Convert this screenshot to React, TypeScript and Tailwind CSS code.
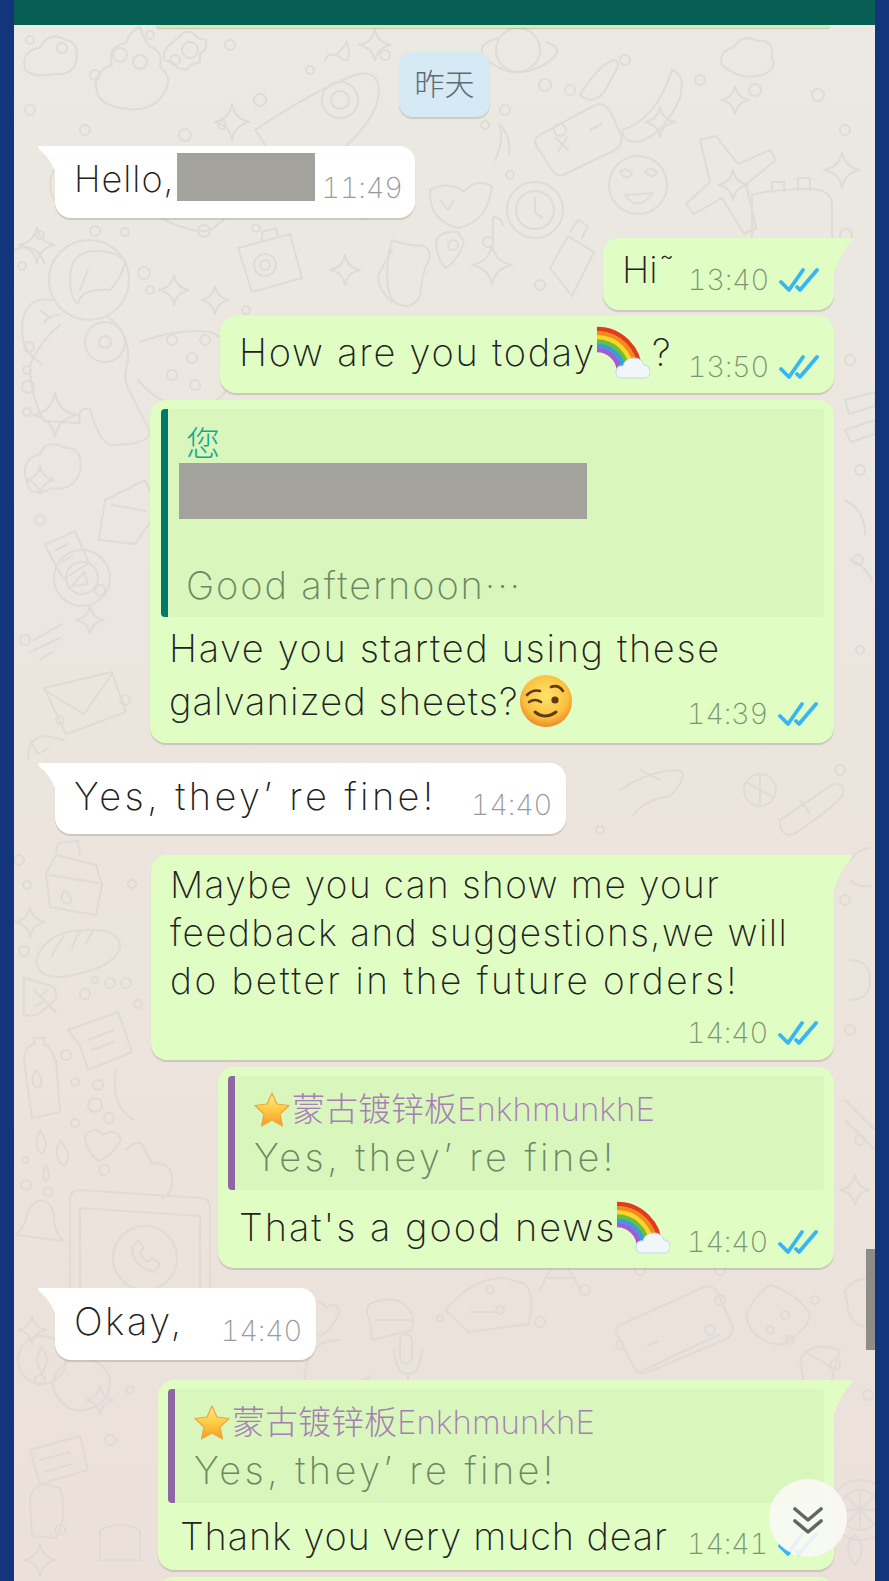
import type { ReactNode } from "react";

const dots: [number, number, number][] = [
  [30, 40, 4], [62, 48, 5], [95, 75, 5], [150, 35, 4], [175, 60, 5], [230, 45, 5], [260, 100, 6], [310, 70, 4], [385, 55, 5], [452, 90, 5],
  [30, 110, 5], [85, 130, 5], [185, 135, 6], [222, 125, 4], [505, 110, 5], [545, 85, 6], [570, 90, 5], [625, 60, 5], [700, 80, 5], [755, 90, 6],
  [818, 95, 6], [845, 130, 5], [40, 235, 4], [95, 231, 5], [125, 232, 4], [22, 266, 4], [144, 273, 6], [150, 290, 4], [204, 231, 6],
  [29, 347, 5], [27, 370, 4], [28, 387, 6], [27, 412, 4], [246, 310, 4], [256, 228, 4], [330, 205, 6], [365, 215, 4], [510, 175, 4],
  [560, 130, 6], [485, 125, 4], [540, 285, 5], [610, 300, 5], [720, 290, 5], [846, 235, 6], [850, 360, 5], [860, 470, 5], [858, 560, 5],
  [19, 860, 5], [27, 885, 4], [132, 884, 4], [24, 951, 5], [95, 980, 3], [110, 983, 5], [126, 983, 5], [85, 994, 5], [138, 1004, 4],
  [66, 1055, 5], [75, 1082, 4], [98, 1085, 5], [95, 1105, 7], [109, 1118, 5], [75, 1123, 4], [104, 1170, 5], [25, 1160, 3], [26, 1185, 5],
  [440, 1318, 3], [500, 1310, 4], [540, 1322, 5], [585, 1290, 5], [620, 1345, 4], [710, 1330, 5], [720, 1300, 5], [815, 1300, 4], [790, 1340, 4],
  [365, 1400, 4], [420, 1398, 5], [635, 1410, 4], [742, 1395, 4], [835, 1365, 5], [868, 1395, 5], [40, 1380, 5], [110, 1440, 5], [60, 1530, 5],
  [130, 1390, 4], [840, 770, 5], [850, 1030, 5], [860, 1140, 5], [25, 640, 5], [60, 720, 4], [100, 590, 5], [125, 700, 5], [40, 520, 5],
  [860, 650, 4], [845, 900, 5], [600, 830, 4], [640, 1270, 5], [490, 1290, 4], [720, 1270, 5],
];

const stars: [number, number, number][] = [
  [37, 245, 18], [174, 290, 15], [375, 45, 16], [232, 122, 18], [660, 122, 15], [733, 185, 15], [842, 170, 18], [215, 300, 14],
  [345, 270, 15], [355, 205, 12], [492, 265, 20], [30, 922, 15], [55, 415, 22], [40, 1560, 16], [735, 100, 14], [100, 1400, 14],
  [32, 1330, 14], [855, 1190, 15], [90, 620, 14], [40, 480, 14],
];

function Wallpaper() {
  return (
    <svg className="absolute inset-0 h-full w-full" viewBox="0 0 861 1581" fill="none" stroke="#dfdcd5" strokeWidth="2" strokeLinecap="round" strokeLinejoin="round">
      <g transform="translate(-14 0)">
        {dots.map(([x, y, r], i) => <circle key={i} cx={x} cy={y} r={r} />)}
        {stars.map(([x, y, r], i) => (
          <path key={i} d={`M${x} ${y - r}Q${x + r * 0.15} ${y - r * 0.15} ${x + r} ${y}Q${x + r * 0.15} ${y + r * 0.15} ${x} ${y + r}Q${x - r * 0.15} ${y + r * 0.15} ${x - r} ${y}Q${x - r * 0.15} ${y - r * 0.15} ${x} ${y - r}Z`} />
        ))}

        {/* top row */}
        <path d="M25 70q-4-20 15-22 8-18 26-8 14 2 10 22-4 14-22 12-20 4-29-4Z" />
        <path d="M98 95q-8-22 14-30-6-18 14-22 4-12 14-16 4 14 10 20 14 4 10 20 14 10 4 26-10 18-36 16-24-2-30-14Z" />
        <circle cx="120" cy="55" r="7" /><circle cx="140" cy="62" r="7" />
        <path d="M178 38l6-6 8 0 6 6 8 2 0 8-6 6 0 8-8 2-6 6-8-2-6-6-8-2 0-8 4-6Z" /><circle cx="190" cy="50" r="8" />
        <path d="M325 60q4-10 16-2t6-16q-2 4-10 12" />
        <path d="M255 130q60-40 100-55 22-6 24 14 0 24-26 50-30 30-50 22l-22 22q-4-24-26-53Z" /><circle cx="340" cy="100" r="18" /><circle cx="340" cy="100" r="9" />
        <circle cx="518" cy="50" r="22" /><path d="M490 62q-20-16 8-24M546 42q24 8-4 24-30 14-52-4" />
        <path d="M580 95q18-30 34-35 8 2 0 14l-10 18q-12 14-24 3Z" />
        <path d="M722 65q-4-14 12-18 8-14 24-6 16-2 14 16 6 12-10 18-22 6-40-10Z" />
        <path d="M622 130q34-10 50-60 14 4 8 28-14 32-36 42-20 6-22-10Z" />
        <path d="M540 135l55-30q10-3 16 8l10 22q3 10-8 16l-50 24q-8 2-13-8l-14-22q-3-6 4-10Z" /><path d="M556 138l12 12M568 136l-10 16M590 130l12-6" />
        <circle cx="638" cy="185" r="29" /><path d="M625 195q12 18 28-2Z" /><path d="M620 172q6-6 12 2-6 8-12-2ZM645 172q6-6 12 0-4 8-12 0Z" />
        <path d="M700 140l10 42-24 22 8 10 28-16 22 36 12-6-10-44 30-24-6-10-32 14-22-28Z" />
        <path d="M752 195q20-6 56-6 22 0 24 14v36h-80Z" /><path d="M772 192v-10h12v10M798 190v-12h12v12" />
        <path d="M88 155q-10 16-4 34 6 4 14 14M60 160q-16 20-6 40M50 150l24 28" />
        <path d="M155 205q-20-6-24-24 14-18 38-16 34 10 20 30-8 14-34 10Z" />
        <path d="M186 228q-34-8-42-34 6-8 18-6 12-14 26-2 10-14 22-4 16 2 14 18 10 14-6 24-10 12-32 4Z" />
        <path d="M172 190q8-8 14 0 8-6 14 2-6 14-14 16-12-4-14-18Z" />
        <path d="M430 190q20-10 34 2 10-14 28-6-4 36-34 42-30-8-28-38Z" /><path d="M440 200l8 10 6-10" />
        <path d="M495 160q10-20 4-36 12 10 10 30" />
        <circle cx="535" cy="210" r="28" /><circle cx="535" cy="210" r="19" /><path d="M535 198v14l7 6" />
        <path d="M458 232q-16-2-22 8 0 18 10 28 12-8 18-26Z" /><circle cx="453" cy="245" r="5" />
        <path d="M493 217v24M493 217q8 0 10 8" /><circle cx="488" cy="242" r="5" />

        {/* astronaut */}
        <circle cx="89" cy="280" r="40" />
        <path d="M70 278q0-32 38-26 22 6 16 14-4 14-14 24-30-2-32 14-8-6-8-26Z" /><path d="M80 290l8-20" />
        <path d="M52 300q-30-4-30 30 0 22 20 34M60 315q-12 0-16 8M40 310l10 8" />
        <path d="M60 325q-20 16-30 40 0 30 14 56l36 2q-4-16 10-14 8 30 20 36 40 0 40-14-16-30-20-40-8-10-2-30 2-28-20-44" />
        <circle cx="105" cy="342" r="20" /><circle cx="105" cy="342" r="6" />
        <path d="M140 342q40-14 70-10 22 8 24 30 0 34-30 44-40 6-66-26" />
        <circle cx="172" cy="340" r="5" /><circle cx="192" cy="358" r="5" /><circle cx="205" cy="340" r="5" /><circle cx="172" cy="375" r="5" /><circle cx="195" cy="385" r="5" />

        <circle cx="265" cy="265" r="11" /><circle cx="265" cy="265" r="5" />
        <path d="M238 248l52-14 12 44-50 14Z" /><path d="M262 240v-8l14-4 2 8" />
        <path d="M392 240q16 6 32 6 10 6 2 20-4 10-6 30-10 18-28 4-10-20 0-60Z" /><path d="M392 250q-6 10-14 26 0 14 14 26" />
        <path d="M550 268l18-32 26 16-22 44Z" /><path d="M570 232l8-12 10 6-6 12" />

        {/* left column */}
        <path d="M15 250q20-10 30 14" />
        <path d="M30 490q-14-30 10-36 6-16 26-6 18 0 14 24-8 20-28 16-14 8-22 2Z" />
        <path d="M45 545l30-14 14 32-26 16ZM56 550l12-6M62 562l10-6" />
        <path d="M105 500l40-20 14 30-24 34-36-4Z" /><path d="M112 505l34 6" />
        <circle cx="82" cy="578" r="28" /><circle cx="82" cy="578" r="16" /><path d="M72 586l12-14 4 12Z" />
        <path d="M34 640l28-16M30 652l30-14M40 660l12-8" />
        <path d="M44 688l68-16 14 40-60 22Z" /><path d="M44 690l40 24 28-40" />
        <path d="M28 760q0-24 18-24l18 4" /><path d="M30 740l8 14 10-6" />

        {/* milk, bread, leaf */}
        <path d="M46 873l10-18 40 10 6 20-6 30-46-8-4-34ZM98 883l-48-8M56 853l2-10 20-2 2 14" /><path d="M64 890q-6 12 4 14 8-4-4-14Z" />
        <path d="M36 960q10-30 50-30 30-2 34 14 0 20-42 30-40 10-42-14Z" /><path d="M64 936q-8 10-12 20M80 932q-6 8-8 18M94 930q-6 8-8 14" />
        <path d="M24 978l28 8q10 10-2 18-14 16-26 10Z" /><path d="M34 990l22 22M40 996l8-6M44 1002l-8 4" />
        <path d="M68 1030l50-18 14 40-44 18-8-24Z" /><path d="M88 1040l26-10M92 1050l22-8" />
        <path d="M24 1060q0-12 10-16v-6h10v6q8 4 12 18l4 50-28 6Z" /><path d="M36 1070q-8 14 2 18 8-6-2-18Z" />
        <path d="M116 1070q-6 36 18 50" />
        <path d="M40 1130q-8 18 2 24 8-8-2-24ZM60 1140q-8 18 4 26 10-10-4-26ZM46 1165q-6 12 0 16 6-4 0-16Z" />
        <path d="M85 1135q10-10 18 0 12-8 18 4-8 16-22 22-14-10-14-26Z" />
        <path d="M16 1235q10-10 12-24 6-12 16-10 10 4 10 20 2 14 10 20Z" /><circle cx="48" cy="1192" r="4" />

        {/* whatsapp screen */}
        <path d="M70 1200q0-10 10-10l120 8q10 0 10 10l0 90q0 10-10 10H70Z" />
        <path d="M80 1208l120 8v80H80Z" /><circle cx="145" cy="1258" r="32" /><path d="M132 1248q0 18 22 24l6-8-8-6-4 4q-6-2-8-10l4-4-6-8Z" />
        <path d="M126 1150q10-10 16-6l10 20q14-4 20 10 2 20-10 24" />

        {/* bottom */}
        <path d="M340 1340q-30 0-34 28-6 16 14 22 30 4 50-14M370 1320q-8-14 4-18 20-6 30 2 12 10 8 26l-40 10ZM375 1320h36" />
        <path d="M300 1310q20-16 26-2 10-8 14 4-10 20-20 24-16-10-20-26Z" />
        <rect x="400" y="1334" width="12" height="30" rx="6" /><path d="M394 1350q2 24 14 24t14-24M408 1374v22" />
        <path d="M445 1310q30-34 60-32l20 6q10 10 4 40l-60 8ZM470 1312h28" />
        <path d="M540 1290q10-22 20-34 14 20 20 34M548 1278h24" />
        <path d="M620 1325l84-38q10-2 14 6l14 32q2 10-6 14l-80 34q-8 2-12-6l-18-34q-2-6 4-8Z" /><path d="M648 1345l10-4M640 1372l80-38" />
        <path d="M770 1285q30 10 40 30-4 18-30 30-28-4-34-28 6-20 24-32Z" /><circle cx="785" cy="1315" r="4" /><circle cx="770" cy="1330" r="4" />
        <path d="M800 1360q10-20 40-10l-14 50-20-4Z" /><path d="M805 1352l28 16" />
        <circle cx="540" cy="1450" r="40" /><circle cx="540" cy="1450" r="28" /><path d="M540 1422v56M512 1450h56M520 1430l40 40M560 1430l-40 40" />
        <circle cx="470" cy="1430" r="30" /><path d="M462 1420l18 12-16 14Z" />
        <circle cx="860" cy="1510" r="30" /><circle cx="860" cy="1510" r="20" /><path d="M860 1490v40M840 1510h40M846 1496l28 28M874 1496l-28 28" />
        <path d="M855 1565q-14-20 0-30 14 14 0 30Z" />
        <path d="M60 1400q-18-20 10-40 30-6 40 18 0 24-18 30-20 8-32-8Z" />
        <path d="M30 1450l50-14 8 34-48 14ZM40 1460l30-8M44 1472l28-8" />
        <circle cx="42" cy="1360" r="24" /><path d="M42 1346l6 14-6 14-6-14Z" />
        <path d="M30 1500q2-14 14-16l16 4q8 30-4 50l-24-2Z" />
        <path d="M100 1530q20-10 40 0v30h-40Z" />

        {/* right edge */}
        <path d="M845 400l30-8v14l-26 8ZM845 430l30-10v14l-24 8Z" />
        <path d="M845 500q20 10 20 34M850 560q14 4 22 20" />
        <path d="M780 820l50-34q12-6 14 6-2 10-50 42-14 4-14-14ZM800 800l10 14" />
        <path d="M620 790q30-20 60-20 8 8-10 26-26 4-38 20M640 770l20 10" />
        <circle cx="760" cy="790" r="16" /><path d="M746 782l28 16M760 774v32" />
        <path d="M850 860q6-10 20-12M850 880q8 8 20 6" />
        <path d="M850 960q20 0 20 20t-20 20" />
        <path d="M845 1100l30 30M845 1120l30 30" />
        <path d="M845 1290q12-16 30-8v40q-18 10-26-8Z" />
      </g>
    </svg>
  );
}

function Ticks() {
  return (
    <svg width="40" height="26" viewBox="0 0 40 26" fill="none" stroke="#38b6f1" strokeWidth="3.8" strokeLinecap="round" strokeLinejoin="round">
      <path d="M2 15l8 8L24 3" />
      <path d="M18 20l3 3L38 3" />
    </svg>
  );
}

function Rainbow() {
  const bands = ["#e23a1e", "#f48a1c", "#fbd52a", "#6cbf35", "#3a9be0", "#a45ad0"];
  return (
    <svg width="58" height="54" viewBox="0 0 58 54" fill="none" className="-ml-[4px] inline-block shrink-0">
      <defs>
        <clipPath id="bow"><path d="M5 0h53v46H5z" /></clipPath>
      </defs>
      <g clipPath="url(#bow)">
        {bands.map((c, i) => (
          <circle key={c} cx="5" cy="47" r={43 - i * 4.2} stroke={c} strokeWidth="4.6" />
        ))}
      </g>
      <path d="M30 53q-7 0-6-7 1-6 7-5 2-8 11-8 8 0 10 7 6 0 6 7 0 6-6 6Z" fill="#f1f6f9" stroke="#c6d7e2" strokeWidth="1" />
    </svg>
  );
}

function Wink() {
  return (
    <svg width="54" height="54" viewBox="0 0 54 54" className="inline-block shrink-0">
      <defs>
        <radialGradient id="wink" cx="50%" cy="40%" r="60%">
          <stop offset="0" stopColor="#fde46a" />
          <stop offset="0.7" stopColor="#fbc13f" />
          <stop offset="1" stopColor="#ee8a2a" />
        </radialGradient>
      </defs>
      <circle cx="27" cy="27" r="26" fill="url(#wink)" />
      <g fill="none" stroke="#5f3a16" strokeWidth="2.6" strokeLinecap="round">
        <path d="M8 21q6-6 13-4" />
        <path d="M10 28q6-4 12 0" />
        <path d="M32 13q7-3 12 4" />
        <path d="M16 38q10 8 21 0" strokeWidth="3" />
      </g>
      <circle cx="36" cy="26" r="3.6" fill="#5f3a16" />
    </svg>
  );
}

function Star() {
  return (
    <svg width="36" height="36" viewBox="0 0 36 36" className="inline-block shrink-0">
      <defs>
        <linearGradient id="star" x1="0" y1="0" x2="0" y2="1">
          <stop offset="0" stopColor="#ffe98a" />
          <stop offset="0.55" stopColor="#fdc93f" />
          <stop offset="1" stopColor="#f39b2a" />
        </linearGradient>
      </defs>
      <path d="M18 2l5 11 12 1.500-9 8.500 2.500 12L18 29l-10.500 6L10 23 1 14.500 13 13Z" fill="url(#star)" stroke="#efa63a" strokeWidth="1.200" strokeLinejoin="round" />
    </svg>
  );
}

function Chevrons() {
  return (
    <svg width="32" height="28" viewBox="0 0 32 28" fill="none" stroke="#666661" strokeWidth="3.6" strokeLinecap="round" strokeLinejoin="round" className="mt-[6px]">
      <path d="M3 2l13 11L29 2" />
      <path d="M3 14l13 11 13-11" />
    </svg>
  );
}

function Time({ value, mine }: { value: string; mine?: boolean }) {
  return (
    <span className={`text-[29px] leading-none font-extralight tracking-[-0.3px] tabular-nums ${mine ? "text-[#7d9472]" : "text-[#9a9a9a]"}`}>{value}</span>
  );
}

function Tail({ side }: { side: "left" | "right" }) {
  if (side === "left") {
    return (
      <svg width="20" height="34" viewBox="0 0 20 34" className="absolute -left-[17px] top-0">
        <path d="M0 0h20v34Q15 14 1 3Z" fill="#ffffff" />
      </svg>
    );
  }
  return (
    <svg width="22" height="34" viewBox="0 0 22 34" className="absolute -right-[19px] top-0">
      <path d="M0 0h21q1 0 0 2Q10 14 3 34H0Z" fill="#e0fdc3" />
    </svg>
  );
}

function Bubble({ mine, tail, className, children }: { mine?: boolean; tail?: boolean; className: string; children: ReactNode }) {
  return (
    <div
      className={`relative shrink-0 shadow-[0_2px_1px_rgba(90,90,70,0.22)] ${mine ? "self-end mr-[41px] bg-[#e0fdc3]" : "self-start ml-[41px] bg-white"} ${tail ? (mine ? "rounded-[16px] rounded-tr-none" : "rounded-[16px] rounded-tl-none") : "rounded-[16px]"} ${className}`}
    >
      {tail && <Tail side={mine ? "right" : "left"} />}
      {children}
    </div>
  );
}

function Stamp({ value }: { value: string }) {
  return (
    <div className="flex items-center gap-[10px]">
      <Time value={value} mine />
      <Ticks />
    </div>
  );
}

function Quote({ name, className, barClass, children }: { name?: string; className: string; barClass: string; children: ReactNode }) {
  return (
    <div className={`rounded-[4px] border-l-[7px] bg-[#d9f6bc] ${barClass} ${className}`}>
      {name && (
        <div className="flex items-center pl-[19px] pt-[12px] text-[33px] leading-[42px] font-extralight text-[#a77db8]">
          <Star />
          <span className="ml-[2px]">{name}</span>
        </div>
      )}
      {children}
    </div>
  );
}

export default function App() {
  return (
    <div className="relative h-[1581px] w-[889px] overflow-hidden bg-[#12357c] px-[14px] font-['Inter','Noto_Sans_CJK_SC',sans-serif] text-[#222]">
      <div className="relative flex h-full flex-col overflow-hidden bg-gradient-to-b from-[#ebe9e3] via-[#ece5de] to-[#ebe1da]">
        <Wallpaper />

        <div className="relative z-10 h-[25px] shrink-0 bg-[#075e54]" />
        <div className="relative mr-[45px] h-[3px] w-[674px] shrink-0 self-end rounded-b-[8px] bg-[#d0eeac] shadow-[0_1px_1px_rgba(90,90,70,0.25)]" />

        <div className="relative mt-[24px] flex h-[65px] w-[91px] shrink-0 items-center justify-center self-center rounded-[14px] bg-[#d5eaf5] text-[30px] font-extralight text-[#5d6b72] shadow-[0_2px_1px_rgba(90,90,70,0.2)]">
          昨天
        </div>

        <Bubble tail className="mt-[29px] flex h-[72px] w-[360px] items-start pl-[19px]">
          <span className="mt-[12px] text-[36px] leading-[42px] font-extralight tracking-[1px]">Hello,</span>
          <div className="ml-[3px] mt-[7px] h-[48px] w-[138px] bg-[#a3a29d]" />
          <div className="ml-[6px] mt-[27px]"><Time value="11:49" /></div>
        </Bubble>

        <Bubble mine tail className="mt-[20px] flex h-[72px] w-[231px] items-start justify-between pl-[19px] pr-[15px]">
          <span className="mt-[11px] text-[37px] leading-[42px] font-extralight">Hi˜</span>
          <div className="mt-[27px]"><Stamp value="13:40" /></div>
        </Bubble>

        <Bubble mine className="mt-[6px] flex h-[77px] w-[614px] items-start justify-between pl-[19px] pr-[15px]">
          <div className="mt-[9px] flex items-center text-[38px] leading-[42px] font-extralight tracking-[1.75px]">
            <span>How are you today</span>
            <Rainbow />
            <span className="ml-[2px]">?</span>
          </div>
          <div className="mt-[36px]"><Stamp value="13:50" /></div>
        </Bubble>

        <Bubble mine className="mt-[7px] h-[343px] w-[684px] py-[9px] pl-[11px] pr-[10px]">
          <Quote className="h-[208px] pl-[18px]" barClass="border-[#00796b]">
            <div className="pt-[15px] text-[34px] leading-[40px] font-extralight text-[#17a68f]">您</div>
            <div className="-ml-[7px] mt-[-1px] h-[56px] w-[408px] bg-[#a3a29d]" />
            <div className="mt-[44px] text-[38px] leading-[44px] font-extralight tracking-[1.9px] text-[#6d8763]">Good afternoon···</div>
          </Quote>
          <div className="relative pl-[8px]">
            <div className="mt-[5px] text-[38px] leading-[52px] font-extralight tracking-[1.65px]">Have you started using these</div>
            <div className="flex items-center justify-between pr-[6px]">
              <div className="flex items-center text-[38px] leading-[52px] font-extralight tracking-[1.05px]">
                <span>galvanized sheets?</span>
                <Wink />
              </div>
              <div className="mt-[25px]"><Stamp value="14:39" /></div>
            </div>
          </div>
        </Bubble>

        <Bubble tail className="mt-[20px] flex h-[71px] w-[511px] items-start justify-between pl-[19px] pr-[14px]">
          <span className="mt-[12px] text-[38px] leading-[42px] font-extralight tracking-[3.4px]">Yes, they’ re fine!</span>
          <div className="mt-[27px]"><Time value="14:40" /></div>
        </Bubble>

        <Bubble mine tail className="mt-[21px] h-[205px] w-[683px] pl-[19px] pr-[16px]">
          <div className="pt-[6px] text-[37px] leading-[48px] font-extralight">
            <div className="tracking-[1.4px]">Maybe you can show me your</div>
            <div className="tracking-[1.45px]">feedback and suggestions,we will</div>
            <div className="tracking-[2.5px]">do better in the future orders!</div>
          </div>
          <div className="mt-[13px] flex justify-end"><Stamp value="14:40" /></div>
        </Bubble>

        <Bubble mine className="mt-[7px] h-[201px] w-[616px] py-[9px] pl-[10px] pr-[10px]">
          <Quote name="蒙古镀锌板EnkhmunkhE" className="h-[114px]" barClass="border-[#8e66a3]">
            <div className="mt-[4px] pl-[19px] text-[38px] leading-[46px] font-extralight tracking-[3.4px] text-[#6d8763]">Yes, they’ re fine!</div>
          </Quote>
          <div className="flex items-start justify-between pl-[11px] pr-[6px]">
            <div className="mt-[10px] flex items-center text-[38px] leading-[42px] font-extralight tracking-[1.95px]">
              <span>That's a good news</span>
              <Rainbow />
            </div>
            <div className="mt-[37px]"><Stamp value="14:40" /></div>
          </div>
        </Bubble>

        <Bubble tail className="mt-[20px] flex h-[72px] w-[261px] items-start justify-between pl-[19px] pr-[14px]">
          <span className="mt-[12px] text-[38px] leading-[42px] font-extralight tracking-[2.5px]">Okay,</span>
          <div className="mt-[28px]"><Time value="14:40" /></div>
        </Bubble>

        <Bubble mine tail className="mt-[20px] h-[190px] w-[676px] py-[9px] pl-[10px] pr-[10px]">
          <Quote name="蒙古镀锌板EnkhmunkhE" className="h-[114px]" barClass="border-[#8e66a3]">
            <div className="mt-[4px] pl-[19px] text-[38px] leading-[46px] font-extralight tracking-[3.4px] text-[#6d8763]">Yes, they’ re fine!</div>
          </Quote>
          <div className="flex items-start justify-between pl-[12px] pr-[6px]">
            <span className="mt-[12px] text-[38px] leading-[42px] font-extralight tracking-[0.8px]">Thank you very much dear</span>
            <div className="mt-[26px]"><Stamp value="14:41" /></div>
          </div>
        </Bubble>

        <div className="mr-[41px] mt-[7px] h-[20px] w-[676px] shrink-0 self-end rounded-t-[16px] bg-[#e0fdc3]" />

        {/* scrollbar thumb and jump-to-bottom button sit over the chat */}
        <div className="absolute right-0 top-[1249px] z-10 h-[101px] w-[9px] bg-[#8f8b86]" />
        <div className="absolute left-[755px] top-[1479px] z-20 flex h-[78px] w-[78px] items-center justify-center rounded-full bg-[#f9f9f6]/90">
          <Chevrons />
        </div>
      </div>
    </div>
  );
}
